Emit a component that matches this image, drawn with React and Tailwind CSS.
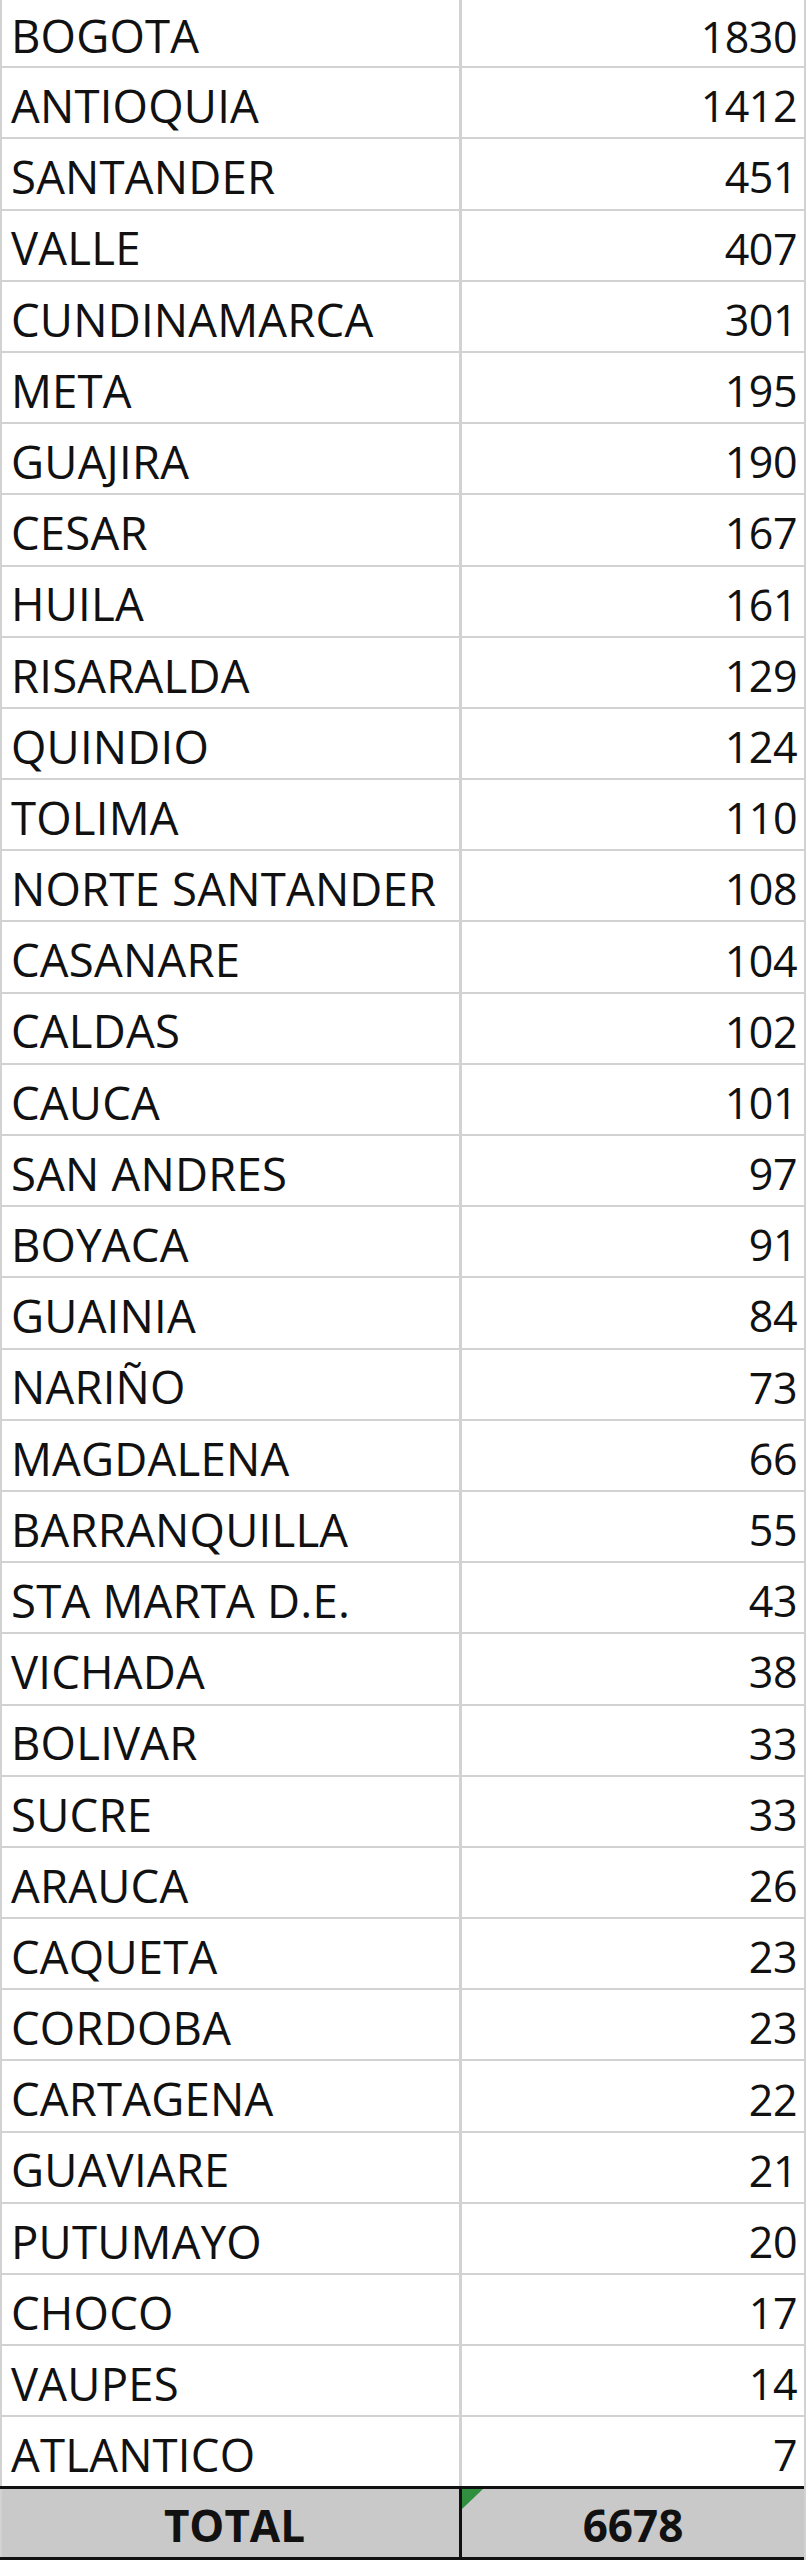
const rows = [
  ["BOGOTA", 1830],
  ["ANTIOQUIA", 1412],
  ["SANTANDER", 451],
  ["VALLE", 407],
  ["CUNDINAMARCA", 301],
  ["META", 195],
  ["GUAJIRA", 190],
  ["CESAR", 167],
  ["HUILA", 161],
  ["RISARALDA", 129],
  ["QUINDIO", 124],
  ["TOLIMA", 110],
  ["NORTE SANTANDER", 108],
  ["CASANARE", 104],
  ["CALDAS", 102],
  ["CAUCA", 101],
  ["SAN ANDRES", 97],
  ["BOYACA", 91],
  ["GUAINIA", 84],
  ["NARIÑO", 73],
  ["MAGDALENA", 66],
  ["BARRANQUILLA", 55],
  ["STA MARTA D.E.", 43],
  ["VICHADA", 38],
  ["BOLIVAR", 33],
  ["SUCRE", 33],
  ["ARAUCA", 26],
  ["CAQUETA", 23],
  ["CORDOBA", 23],
  ["CARTAGENA", 22],
  ["GUAVIARE", 21],
  ["PUTUMAYO", 20],
  ["CHOCO", 17],
  ["VAUPES", 14],
  ["ATLANTICO", 7],
];

const Row = ({ name, value, first, last }) => {
  const height = first ? "h-[68.2px]" : "h-[71.2px]";
  const bottom = last ? "border-b-[3px] border-b-[#111]" : "border-b-2 border-b-[#d2d2d2]";
  return (
    <div className={`flex ${height} ${bottom}`}>
      <div className="w-[462px] shrink-0 flex items-center pt-[6px] pl-[9px] border-l-2 border-l-[#d2d2d2] border-r-[3px] border-r-[#d2d2d2]">
        <span className="text-[45.5px] leading-none font-medium tracking-[0.2px]">{name}</span>
      </div>
      <div className="flex-1 flex items-center justify-end pt-[6px] pr-[7px]">
        <span className="text-[43px] leading-none font-medium tracking-[-0.5px]">{value}</span>
      </div>
    </div>
  );
};

export default function App() {
  const total = rows.reduce((s, r) => s + r[1], 0);
  return (
    <div
      className="w-[806px] bg-white text-[#111] border-r-2 border-r-[#d2d2d2]"
      style={{ fontFamily: '"Open Sans", "Noto Sans", sans-serif' }}
    >
      {rows.map(([name, value], i) => (
        <Row key={name} name={name} value={value} first={i === 0} last={i === rows.length - 1} />
      ))}
      <div className="flex h-[71px] bg-[#c9c9c9] border-b-[3px] border-b-[#111] font-bold">
        <div className="w-[462px] shrink-0 flex items-center justify-center pt-[5px] pl-[8px] border-l-2 border-l-[#d2d2d2] border-r-[3px] border-r-[#111]">
          <span className="text-[44px] leading-none">TOTAL</span>
        </div>
        <div className="relative flex-1 flex items-center justify-center pt-[5px]">
          <svg className="absolute left-0 top-0" width="21" height="20" viewBox="0 0 21 20">
            <polygon points="0,0 21,0 0,20" fill="#2f8f3f" />
          </svg>
          <span className="text-[44px] leading-none">{total}</span>
        </div>
      </div>
    </div>
  );
}
